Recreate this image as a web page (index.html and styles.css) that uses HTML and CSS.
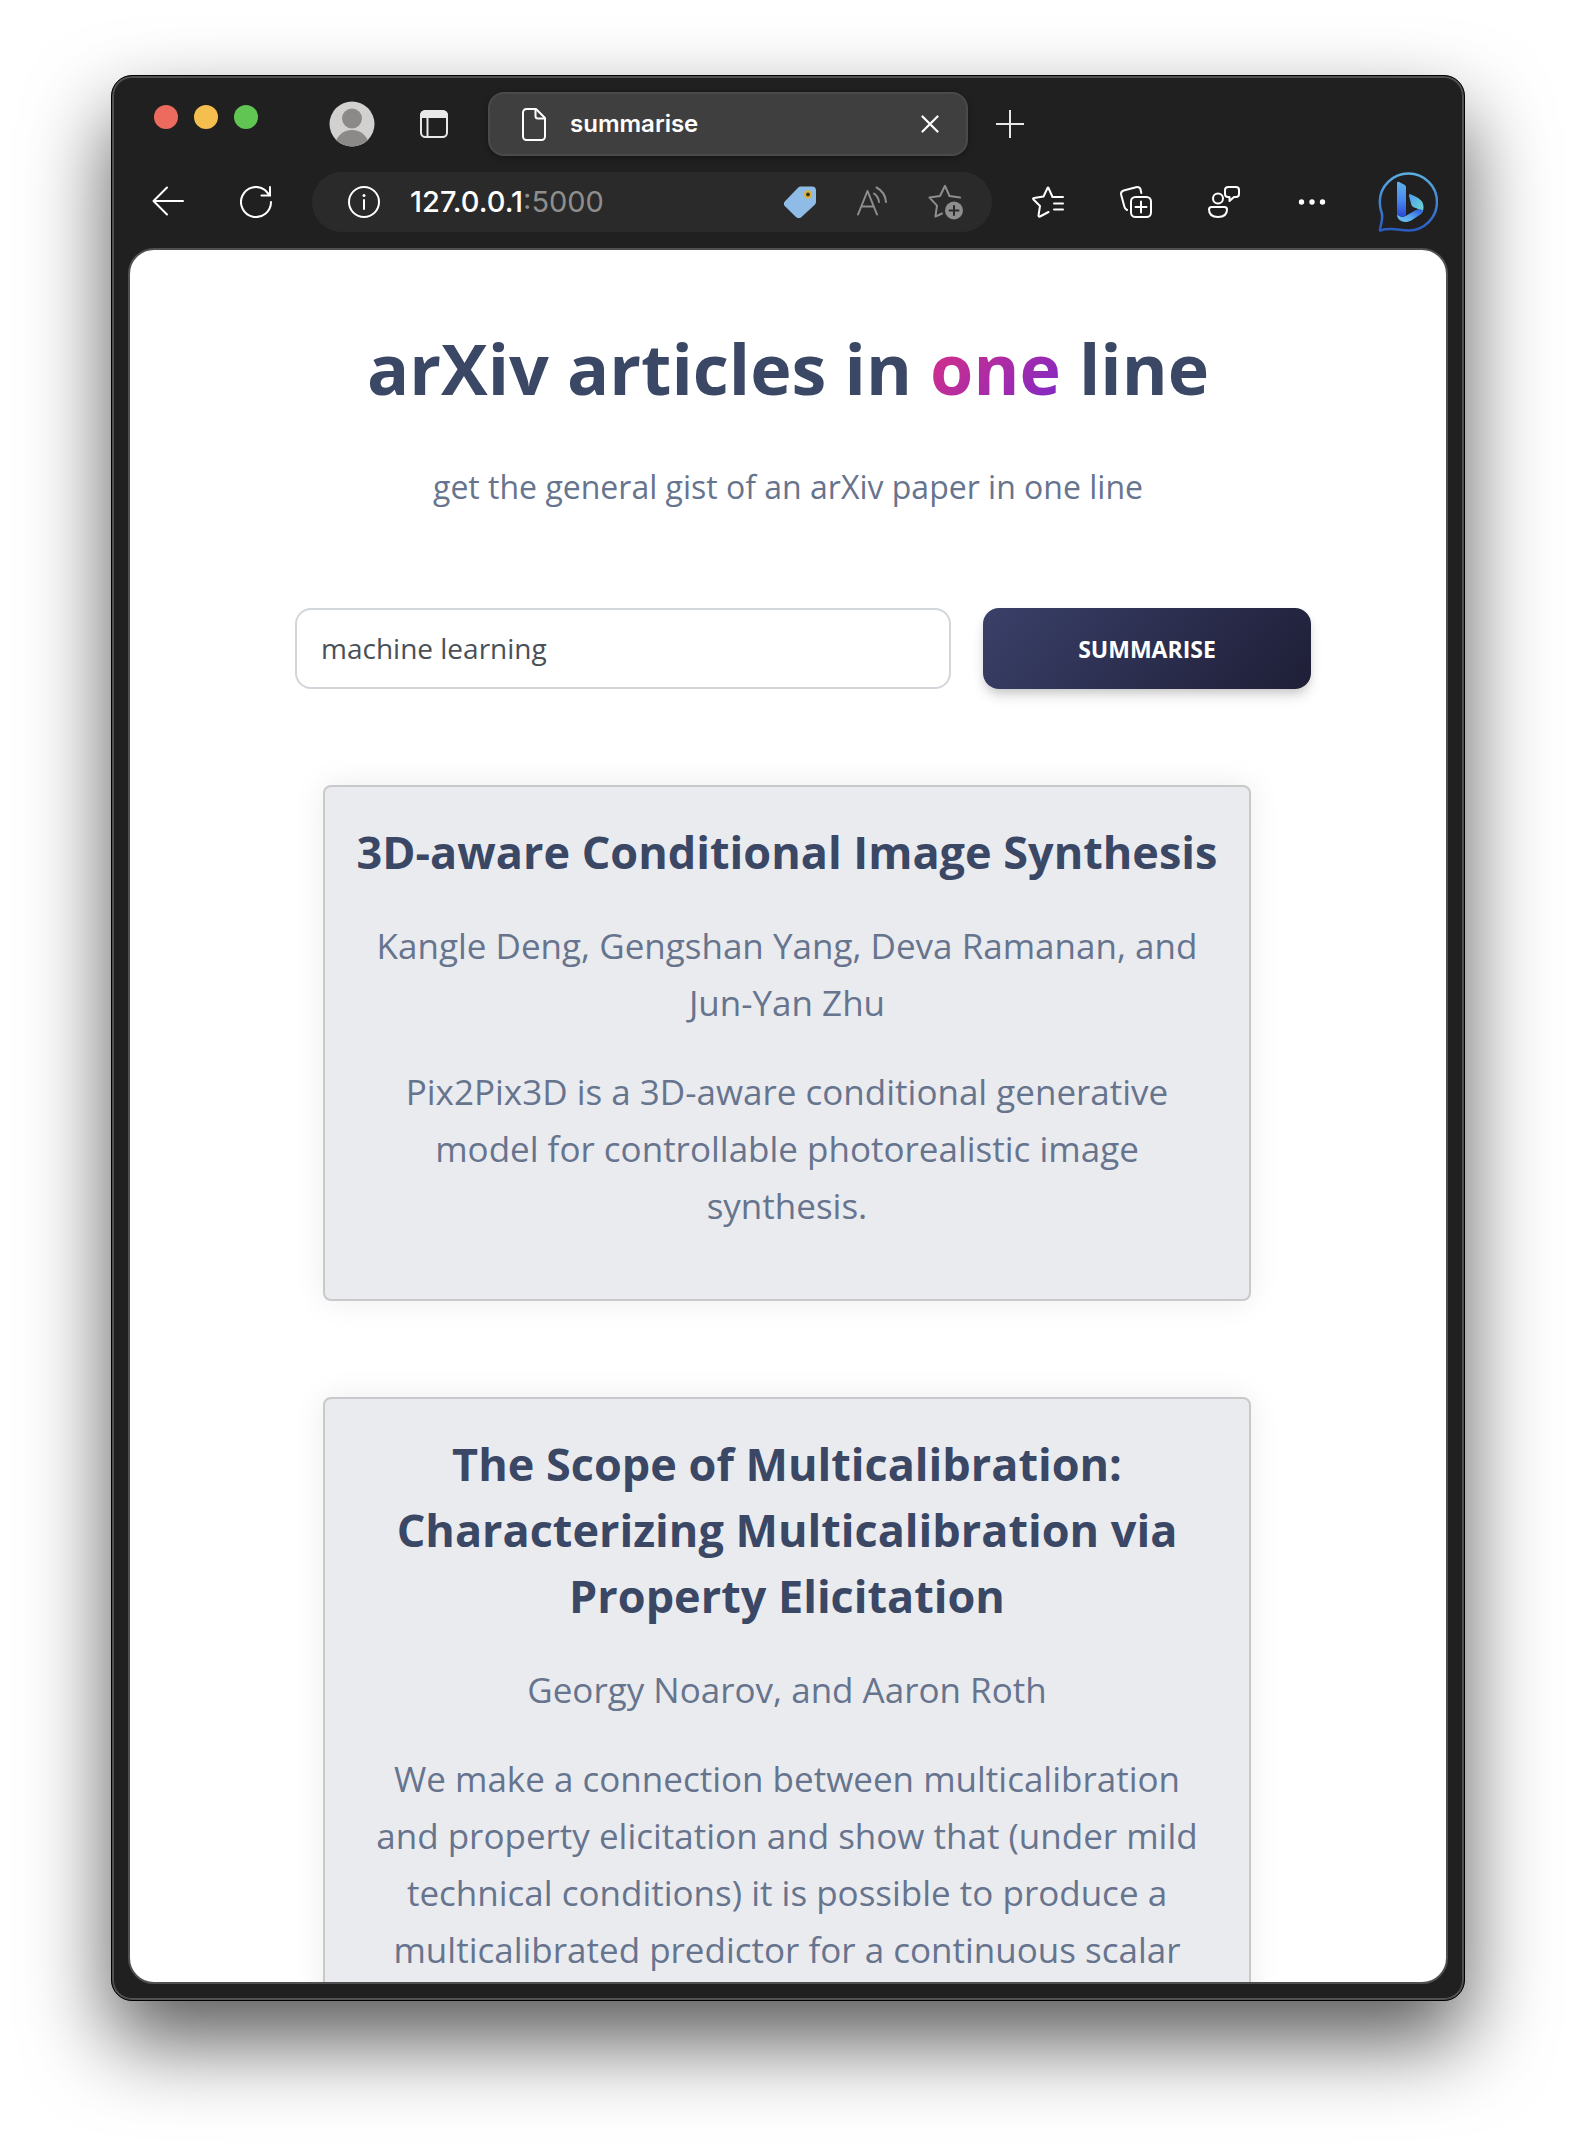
FILE: index.html
```html
<!DOCTYPE html>
<html lang="en">
<head>
  <meta charset="utf-8">
  <title>summarise</title>
  <meta name="viewport" content="width=device-width, initial-scale=1">
  <link rel="stylesheet" href="styles.css">
</head>
<body>
  <div class="window">
    <header class="tabbar">
      <div class="lights">
        <button class="light light-close" aria-label="Close window"></button>
        <button class="light light-min" aria-label="Minimise window"></button>
        <button class="light light-max" aria-label="Zoom window"></button>
      </div>
      <button class="icon-btn avatar" aria-label="Profile">
        <svg width="46" height="46" viewBox="0 0 46 46">
          <defs><clipPath id="face"><circle cx="23" cy="23" r="22.5"/></clipPath></defs>
          <circle cx="23" cy="23" r="22.5" fill="#d2d1cf"/>
          <g clip-path="url(#face)" fill="#8b8a88"><circle cx="23" cy="17.500" r="10"/><circle cx="23" cy="46.500" r="17.500"/></g>
        </svg>
      </button>
      <button class="icon-btn" aria-label="Tab actions">
        <svg width="28" height="28" viewBox="0 0 28 28" fill="none" stroke="#e8e8e8" stroke-width="2">
          <rect x="1" y="1" width="26" height="26" rx="4.500"/>
          <path d="M1 5.500A4.500 4.500 0 0 1 5.500 1h17A4.500 4.500 0 0 1 27 5.500V7H1z" fill="#e8e8e8"/>
          <path d="M7.500 8v19"/>
        </svg>
      </button>
      <div class="tab">
        <svg width="24" height="34" viewBox="0 0 24 34" fill="none" stroke="#fff" stroke-width="2" stroke-linejoin="round">
          <path d="M4.500 2H14l9 9v18.500a3.500 3.500 0 0 1-3.500 3.500h-15A3.500 3.500 0 0 1 1 29.500v-24A3.500 3.500 0 0 1 4.500 2z"/>
          <path d="M13.500 2v7a2.500 2.500 0 0 0 2.500 2.500h7"/>
        </svg>
        <span class="tab-title">summarise</span>
        <button class="icon-btn" aria-label="Close tab">
          <svg width="18" height="18" viewBox="0 0 18 18" stroke="#fff" stroke-width="2.200" stroke-linecap="round"><path d="M1.500 1.500l15 15M16.500 1.500l-15 15"/></svg>
        </button>
      </div>
      <button class="icon-btn" aria-label="New tab">
        <svg width="28" height="28" viewBox="0 0 28 28" stroke="#e8e8e8" stroke-width="2"><path d="M14 0v28M0 14h28"/></svg>
      </button>
    </header>

    <nav class="toolbar">
      <button class="icon-btn" aria-label="Back">
        <svg width="32" height="32" viewBox="0 0 32 32" fill="none" stroke="#fff" stroke-width="2" stroke-linecap="round" stroke-linejoin="round"><path d="M31 15H1.500M15 1.500L1.500 15 15 28.500"/></svg>
      </button>
      <button class="icon-btn" aria-label="Refresh">
        <svg width="32" height="32" viewBox="0 0 32 32" fill="none" stroke="#fff" stroke-width="2" stroke-linecap="round"><path d="M31 16A15 15 0 1 1 25 4L29.500 9M30 1v8.500h-8.500"/></svg>
      </button>
      <div class="address">
        <svg width="32" height="32" viewBox="0 0 32 32" fill="none" stroke="#fff" stroke-width="2" stroke-linecap="round"><circle cx="16" cy="16" r="15"/><path d="M16 14v9"/><circle cx="16" cy="9.500" r="1.500" fill="#fff" stroke="none"/></svg>
        <div class="url" role="textbox" contenteditable="true" spellcheck="false" aria-label="Address">127.0.0.1<span class="port">:5000</span></div>
        <button class="icon-btn" aria-label="Shopping">
          <svg width="32" height="32" viewBox="0 0 32 32"><path d="M17 .5h11a4 4 0 0 1 4 4v11.500a4 4 0 0 1-1.200 2.800L17.500 31a4 4 0 0 1-5.500 0L1 20.300a3.500 3.500 0 0 1 0-5L14 1.700a4 4 0 0 1 3-1.200z" fill="#8fbce6"/><circle cx="24" cy="8.500" r="4.200" fill="#d8b441"/><circle cx="24" cy="8.500" r="2" fill="#3a3320"/></svg>
        </button>
        <button class="icon-btn" aria-label="Read aloud">
          <svg width="32" height="32" viewBox="0 0 32 32" fill="none" stroke="#8e8e8e" stroke-width="2" stroke-linecap="round" stroke-linejoin="round"><path d="M2 28.500L11.500 5 21 28.500M5.500 20.500h12.200M18 7.500a12 12 0 0 1 5 8.500M20.500 1.500a18 18 0 0 1 9.500 14.500"/></svg>
        </button>
        <button class="icon-btn" aria-label="Add to favourites">
          <svg width="36" height="36" viewBox="0 0 36 36" fill="none" stroke="#8e8e8e" stroke-width="2" stroke-linecap="round" stroke-linejoin="round"><path d="M32 13.500L21.500 12 17 1.800 12 12 1.500 13.600l7.500 8-1.600 11L14 29.500"/><circle cx="26" cy="26.500" r="9" fill="#8e8e8e" stroke="none"/><path d="M26 22v9M21.500 26.500h9" stroke="#2a2a2a"/></svg>
        </button>
      </div>
      <div class="actions">
        <button class="icon-btn" aria-label="Favourites">
          <svg width="32" height="32" viewBox="0 0 32 32" fill="none" stroke="#fff" stroke-width="2" stroke-linecap="round" stroke-linejoin="round"><path d="M31 11H20.500L16.500 2q-.5-1-1 0L11.500 10.500 2 12q-1.500.5-.5 1.500L8 20l-1.500 9.500q0 1.500 1.500 1L16.500 26M22 17.500h9M22 23.500h9"/></svg>
        </button>
        <button class="icon-btn" aria-label="Collections">
          <svg width="32" height="32" viewBox="0 0 32 32" fill="none" stroke="#fff" stroke-width="2" stroke-linecap="round" stroke-linejoin="round"><path d="M7 24q-2-1-2.500-3L1.200 9q-.8-3.500 2.500-4.500L16 1.200q3.500-.8 4.500 2L21.300 7"/><rect x="11" y="11" width="20" height="20" rx="4.500"/><path d="M21 15.500v11M15.500 21h11"/></svg>
        </button>
        <button class="icon-btn" aria-label="Feedback">
          <svg width="32" height="32" viewBox="0 0 32 32" fill="none" stroke="#fff" stroke-width="2" stroke-linecap="round" stroke-linejoin="round"><circle cx="10" cy="12.500" r="5"/><path d="M3.500 21h13q2.500 0 2.500 2.500Q19 31 10 31T1 23.500Q1 21 3.500 21zM20.500 1h7.500q3 0 3 3v4q0 3-3 3h-2l-4.500 4V11H20q-3 0-3-3V4q0-3 3.500-3z"/></svg>
        </button>
        <button class="icon-btn" aria-label="More">
          <svg width="32" height="32" viewBox="0 0 32 32" fill="#fff"><circle cx="5.500" cy="16" r="2.700"/><circle cx="16" cy="16" r="2.700"/><circle cx="26.500" cy="16" r="2.700"/></svg>
        </button>
      </div>
      <button class="icon-btn bing" aria-label="Discover">
        <svg width="60" height="60" viewBox="0 0 60 60" fill="none">
          <defs>
            <linearGradient id="ring" x1="0" y1="0" x2="0" y2="1"><stop offset="0" stop-color="#5aaee0"/><stop offset=".55" stop-color="#3f7fd8"/><stop offset="1" stop-color="#2a5bc0"/></linearGradient>
            <linearGradient id="stem" x1="0" y1="0" x2="0" y2="1"><stop offset="0" stop-color="#5fb2ea"/><stop offset=".5" stop-color="#4a8cf0"/><stop offset="1" stop-color="#2a48d8"/></linearGradient>
            <linearGradient id="hook" x1="0" y1="0" x2="1" y2="1"><stop offset="0" stop-color="#4f9df0"/><stop offset="1" stop-color="#6fdcc8"/></linearGradient>
            <linearGradient id="base" x1="0" y1="1" x2="1" y2="0"><stop offset="0" stop-color="#6cc8f0"/><stop offset=".45" stop-color="#58a8ee"/><stop offset="1" stop-color="#2a50dc"/></linearGradient>
          </defs>
          <path d="M30.500 1.500a28.500 28.500 0 0 1 0 57C21 58.500 14 55 2 58.500 1.500 56 5 50 4 42 2.500 38 1.800 34 1.800 30A28.700 28.500 0 0 1 30.500 1.500z" stroke="url(#ring)" stroke-width="2.500" stroke-linejoin="round"/>
          <path d="M31 24c-.5-1.500.5-2.200 2-1.500 8 3.500 12.500 6 12.500 12.500 0 4-1.500 6-3.500 7.500 0-4-1-5.500-4-6.500-3-.8-4-1.500-4.700-3.500z" fill="url(#hook)"/>
          <path d="M19 42c2 3 6 3.500 9 1.800l9.500-5.500c4-2.200 8-.5 7.300 1.200-.5 1.500-1.500 2.500-3.300 3.600L34 48c-5 3-10 2.500-13-.5-1.500-1.700-2-3-2-5.500z" fill="url(#base)"/>
          <path d="M19 11q0-1.800 1.800-1.200l6 3.200q1.200.8 1.200 2v28c-2 2-6 2.500-9-1z" fill="url(#stem)"/>
        </svg>
      </button>
    </nav>

    <main class="page">
      <h1 class="headline">arXiv articles in <span class="accent">one</span> line</h1>
      <p class="lead">get the general gist of an arXiv paper in one line</p>

      <form class="search" onsubmit="return false">
        <input class="search-input" type="text" value="machine learning" aria-label="Search topic">
        <button class="search-btn" type="submit">Summarise</button>
      </form>

      <section class="results">
        <article class="card">
          <h2 class="card-title">3D-aware Conditional Image Synthesis</h2>
          <p class="card-text">Kangle Deng, Gengshan Yang, Deva Ramanan, and Jun-Yan Zhu</p>
          <p class="card-text">Pix2Pix3D is a 3D-aware conditional generative model for controllable photorealistic image synthesis.</p>
        </article>
        <article class="card">
          <h2 class="card-title">The Scope of Multicalibration: Characterizing Multicalibration via Property Elicitation</h2>
          <p class="card-text">Georgy Noarov, and Aaron Roth</p>
          <p class="card-text">We make a connection between multicalibration and property elicitation and show that (under mild technical conditions) it is possible to produce a multicalibrated predictor for a continuous scalar</p>
        </article>
      </section>
    </main>
  </div>
</body>
</html>
```
FILE: styles.css
```css
* {
  box-sizing: border-box;
}

body {
  margin: 0;
  height: 100vh;
  padding: 75px 111px 147px;
  background: #fff;
  font-family: "Open Sans", sans-serif;
  overflow: hidden;
}

button,
input {
  font: inherit;
}

/* browser window */
.window {
  display: flex;
  flex-direction: column;
  height: 100%;
  padding: 0 16px 16px;
  border: 1px solid #000;
  border-radius: 21px;
  background: #202020;
  box-shadow: inset 0 0 0 2px #505050, 0 40px 84px rgba(0, 0, 0, 0.65);
}

.icon-btn {
  display: flex;
  flex: none;
  padding: 0;
  border: 0;
  background: none;
}

.tabbar {
  display: flex;
  align-items: center;
  height: 96px;
  flex: none;
  padding-left: 26px;
}

.lights {
  display: flex;
  gap: 16px;
  margin: 0 71px 14px 0;
}

.light {
  width: 24px;
  height: 24px;
  padding: 0;
  border: 0;
  border-radius: 50%;
}

.light-close {
  background: #ed6a5e;
}

.light-min {
  background: #f5bf4f;
}

.light-max {
  background: #61c554;
}

.avatar {
  margin-right: 45px;
}

.tab {
  display: flex;
  align-items: center;
  flex: 0 1 480px;
  height: 64px;
  margin: 0 28px 0 40px;
  padding: 0 27px 0 32px;
  border: 2px solid #4a4a4a;
  border-radius: 16px;
  background: #3f3f3f;
  box-shadow: 0 2px 6px rgba(0, 0, 0, 0.3);
}

.tab-title {
  flex: 1;
  margin-left: 24px;
  color: #fff;
  font: 600 24px/32px Inter, sans-serif;
}

.toolbar {
  display: flex;
  align-items: center;
  flex: none;
  height: 60px;
  margin-bottom: 16px;
  padding: 0 10px 0 24px;
  gap: 56px;
}

.address {
  display: flex;
  align-items: center;
  flex: 1;
  height: 60px;
  margin: 0 -16px;
  padding: 0 28px 0 36px;
  border-radius: 30px;
  background: #2a2a2a;
}

.address .icon-btn {
  margin-left: 40px;
}

.url {
  flex: 1;
  margin-left: 30px;
  color: #fff;
  font: 500 29px/36px Inter, sans-serif;
  outline: none;
}

.port {
  color: #8e8e8e;
  font-weight: 400;
}

.actions {
  display: flex;
  gap: 56px;
}

.bing {
  margin-left: -6px;
}

/* page content */
.page {
  flex: 1;
  min-height: 0;
  overflow: hidden;
  border: 2px solid #505050;
  border-radius: 26px;
  background: #fff;
  text-align: center;
}

.headline {
  margin: 73px 0 0;
  color: #3a4765;
  font-size: 70px;
  font-weight: 700;
  line-height: 90px;
}

.accent {
  background: linear-gradient(310deg, #7928ca, #e1307f);
  -webkit-background-clip: text;
  background-clip: text;
  color: transparent;
}

.lead {
  margin: 48px 0 0;
  color: #67748e;
  font-size: 32px;
  line-height: 52px;
}

.search {
  display: grid;
  grid-template-columns: 2fr 1fr;
  gap: 32px;
  margin: 95px 135px 96px 165px;
}

.search-input {
  height: 81px;
  min-width: 0;
  padding: 0 24px 2px;
  border: 2px solid #d2d6da;
  border-radius: 16px;
  background: #fff;
  color: #495057;
  font-size: 28px;
  outline: none;
}

.search-btn {
  height: 81px;
  padding: 0;
  border: 0;
  border-radius: 16px;
  background: linear-gradient(310deg, #1e1e36, #3a4069);
  box-shadow: 0 8px 14px -2px rgba(0, 0, 0, 0.16), 0 4px 8px -2px rgba(0, 0, 0, 0.1);
  color: #fff;
  font-size: 23px;
  font-weight: 700;
  text-transform: uppercase;
}

.results {
  display: flex;
  flex-direction: column;
  gap: 96px;
  margin: 0 195px 0 193px;
}

.card {
  padding: 32px 24px 65px;
  border: 2px solid #c9c9cb;
  border-radius: 8px;
  background: #eaebef;
  box-shadow: 0 0 32px rgba(0, 0, 0, 0.08);
}

.card-title {
  margin: 0;
  color: #3a4765;
  font-size: 45px;
  font-weight: 700;
  line-height: 66px;
}

.card-text {
  margin: 32px 0 0;
  padding: 0 16px;
  color: #67748e;
  font-size: 35px;
  line-height: 57px;
}
```
